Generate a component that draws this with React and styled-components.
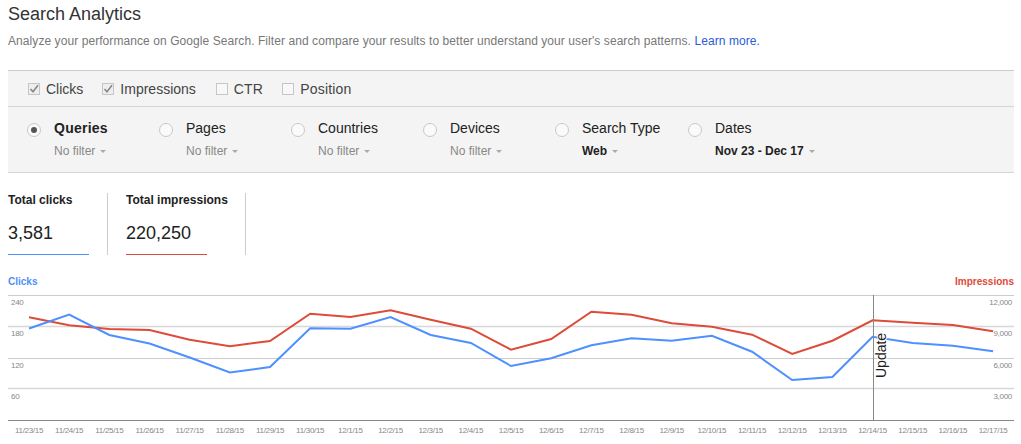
import React from "react"
import styled, { createGlobalStyle } from "styled-components"

const GlobalStyle = createGlobalStyle`
    html, body {
        background: #fff;
        margin: 0;
        padding: 0;
    }
    body {
        font-family: "Liberation Sans", Arial, sans-serif;
    }
`

const BLUE = "#4d90fe"
const RED = "#dd4b39"

const dates = [
    "11/23/15", "11/24/15", "11/25/15", "11/26/15", "11/27/15", "11/28/15", "11/29/15", "11/30/15",
    "12/1/15", "12/2/15", "12/3/15", "12/4/15", "12/5/15", "12/6/15", "12/7/15", "12/8/15", "12/9/15",
    "12/10/15", "12/11/15", "12/12/15", "12/13/15", "12/14/15", "12/15/15", "12/16/15", "12/17/15"
]
const clicks = [
    328.5, 314.5, 335, 343.5, 357.5, 372.5, 367, 328.3, 328.7, 317, 335, 343, 366, 358.3, 345.3, 338.3,
    340.7, 335.7, 351.7, 380, 377, 336.7, 343, 345.7, 351.3
]
const impressions = [
    317.3, 325.3, 329, 330, 339.7, 346.3, 341, 313.7, 317, 310.3, 319.7, 328.7, 349.7, 339, 311.7, 314.7,
    323.3, 326.7, 334.7, 354, 340.7, 320.3, 322.7, 325, 331.3
]
const gridLines = [295.5, 326.5, 358.5, 388.5]
const leftTicks = [["240", 302], ["180", 333], ["120", 365], ["60", 396]]
const rightTicks = [["12,000", 302], ["9,000", 333], ["6,000", 365], ["3,000", 396]]

const xAt = (i) => 29 + i * 40.17
const toPoints = (values) => values.map((y, i) => `${xAt(i).toFixed(1)},${y}`).join(" ")

const Page = styled.div`
    box-sizing: border-box;
    height: 444px;
    overflow: hidden;
    padding: 4px 7px 0 8px;
    width: 1021px;
`

const Title = styled.h1`
    color: #333;
    font-size: 18px;
    font-weight: normal;
    line-height: 20px;
    margin: 0;
`

const Intro = styled.p`
    color: #777;
    font-size: 12px;
    letter-spacing: 0.073px;
    line-height: 16px;
    margin: 9px 0 21px;
`

const LearnMore = styled.a`
    color: #2a5bd7;
    text-decoration: none;
`

const Panel = styled.section`
    background: #f4f4f4;
    border-bottom: 1px solid #d5d5d5;
    border-top: 1px solid #ccc;
`

const MetricBar = styled.div`
    align-items: center;
    border-bottom: 1px solid #d5d5d5;
    box-sizing: border-box;
    display: flex;
    height: 36px;
    padding-left: 20px;
`

const CheckItem = styled.label`
    align-items: center;
    color: #444;
    display: flex;
    font-size: 14px;
    gap: 6px;
    letter-spacing: ${(props) => props.$tracking || 0}px;
    margin-right: ${(props) => props.$gap}px;
`

const CheckBox = styled.span`
    align-items: center;
    background: ${(props) => (props.$checked ? "#eee" : "#f8f8f8")};
    border: 1px solid #c6c6c6;
    box-sizing: border-box;
    display: flex;
    height: 12px;
    justify-content: center;
    width: 12px;
`

const FilterBar = styled.div`
    box-sizing: border-box;
    display: flex;
    height: 65px;
    padding: 13px 0 0 19px;
`

const FilterColumn = styled.div`
    display: flex;
    width: ${(props) => props.$width}px;
`

const Radio = styled.span`
    align-items: center;
    background: #fafafa;
    border: 1px solid #c8c8c8;
    border-radius: 50%;
    box-sizing: border-box;
    display: flex;
    flex: none;
    height: 14px;
    justify-content: center;
    margin: 3px 13px 0 0;
    width: 14px;

    &::after {
        background: #555;
        border-radius: 50%;
        content: "";
        display: ${(props) => (props.$on ? "block" : "none")};
        height: 6px;
        width: 6px;
    }
`

const FilterName = styled.div`
    color: #222;
    font-size: 14px;
    font-weight: ${(props) => (props.$active ? "bold" : "normal")};
    letter-spacing: ${(props) => (props.$active ? "0.25px" : "0")};
    line-height: 16px;
`

const FilterValue = styled.div`
    align-items: center;
    color: ${(props) => (props.$set ? "#222" : "#888")};
    display: flex;
    font-size: 12px;
    font-weight: ${(props) => (props.$set ? "bold" : "normal")};
    gap: 5px;
    line-height: 14px;
    margin-top: 8px;
`

const Caret = styled.span`
    border-left: 3px solid transparent;
    border-right: 3px solid transparent;
    border-top: 3px solid #aaa;
    height: 0;
    width: 0;
`

const Totals = styled.div`
    display: flex;
    margin-top: 20px;
`

const Total = styled.div`
    border-right: 1px solid #ccc;
    box-sizing: border-box;
    height: 62px;
    margin-right: 18px;
    width: ${(props) => props.$width}px;
`

const TotalLabel = styled.div`
    color: #222;
    font-size: 12px;
    font-weight: bold;
    line-height: 14px;
    white-space: nowrap;
`

const TotalValue = styled.div`
    color: #222;
    font-size: 18px;
    line-height: 22px;
    margin-top: 15px;
`

const TotalRule = styled.div`
    background: ${(props) => props.$color};
    height: 1px;
    margin-top: 10px;
    width: 81px;
`

const Legend = styled.div`
    display: flex;
    font-size: 10px;
    font-weight: bold;
    justify-content: space-between;
    line-height: 12px;
    margin-top: 21px;
`

const LegendItem = styled.span`
    color: ${(props) => props.$color};
`

const Chart = styled.svg`
    display: block;
    font-family: "Liberation Sans", Arial, sans-serif;
`

const Tick = styled.text`
    fill: #888;
    font-size: 8px;
    letter-spacing: -0.3px;
`

const UpdateLabel = styled.text`
    fill: #222;
    font-size: 14px;
    paint-order: stroke;
    stroke: #fff;
    stroke-width: 2px;
`

const CheckMark = () => (
    <svg width="10" height="10" viewBox="0 0 10 10">
        <path d="M1.5 5 L4 7.8 L9 1.2" fill="none" stroke="#888" strokeWidth="1.6" />
    </svg>
)

const Check = ({ label, checked, gap, tracking }) => (
    <CheckItem $gap={gap} $tracking={tracking}>
        <CheckBox $checked={checked}>{checked && <CheckMark />}</CheckBox>
        {label}
    </CheckItem>
)

const Filter = ({ name, value, width, active, set }) => (
    <FilterColumn $width={width}>
        <Radio $on={active} />
        <div>
            <FilterName $active={active}>{name}</FilterName>
            <FilterValue $set={set}>
                {value}
                <Caret />
            </FilterValue>
        </div>
    </FilterColumn>
)

const TrafficChart = () => (
    <Chart width="1006" height="156" viewBox="8 288 1006 156">
        {gridLines.map((y, i) => (
            <line key={y} x1="8" x2="1014" y1={y} y2={y} stroke={i % 2 ? "#d8d8d8" : "#ccc"} strokeWidth={i % 2 ? 1.6 : 1} />
        ))}
        <line x1="8" x2="1014" y1="420.5" y2="420.5" stroke="#888" />
        {leftTicks.map(([label, y]) => (
            <Tick key={label} x="11" y={y + 3}>{label}</Tick>
        ))}
        {rightTicks.map(([label, y]) => (
            <Tick key={label} x="1012" y={y + 3} textAnchor="end">{label}</Tick>
        ))}
        <polyline points={toPoints(impressions)} fill="none" stroke={RED} strokeWidth="2" />
        <polyline points={toPoints(clicks)} fill="none" stroke={BLUE} strokeWidth="2" />
        <line x1="873.5" x2="873.5" y1="295" y2="420" stroke="#888" />
        <UpdateLabel transform="translate(886 378) rotate(-90)">Update</UpdateLabel>
        {dates.map((date, i) => (
            <Tick key={date} x={xAt(i)} y="433" textAnchor="middle">{date}</Tick>
        ))}
    </Chart>
)

const App = () => (
    <Page>
        <GlobalStyle />
        <Title>Search Analytics</Title>
        <Intro>
            Analyze your performance on Google Search. Filter and compare your results to better understand your
            user's search patterns. <LearnMore href="#">Learn more.</LearnMore>
        </Intro>
        <Panel>
            <MetricBar>
                <Check label="Clicks" checked gap={19} />
                <Check label="Impressions" checked gap={20} />
                <Check label="CTR" gap={19} tracking={0.2} />
                <Check label="Position" tracking={0.2} />
            </MetricBar>
            <FilterBar>
                <Filter name="Queries" value="No filter" width={132} active />
                <Filter name="Pages" value="No filter" width={132} />
                <Filter name="Countries" value="No filter" width={132} />
                <Filter name="Devices" value="No filter" width={132} />
                <Filter name="Search Type" value="Web" width={133} set />
                <Filter name="Dates" value="Nov 23 - Dec 17" width={200} set />
            </FilterBar>
        </Panel>
        <Totals>
            <Total $width={100}>
                <TotalLabel>Total clicks</TotalLabel>
                <TotalValue>3,581</TotalValue>
                <TotalRule $color={BLUE} />
            </Total>
            <Total $width={120}>
                <TotalLabel>Total impressions</TotalLabel>
                <TotalValue>220,250</TotalValue>
                <TotalRule $color={RED} />
            </Total>
        </Totals>
        <Legend>
            <LegendItem $color={BLUE}>Clicks</LegendItem>
            <LegendItem $color={RED}>Impressions</LegendItem>
        </Legend>
        <TrafficChart />
    </Page>
)

export default App
